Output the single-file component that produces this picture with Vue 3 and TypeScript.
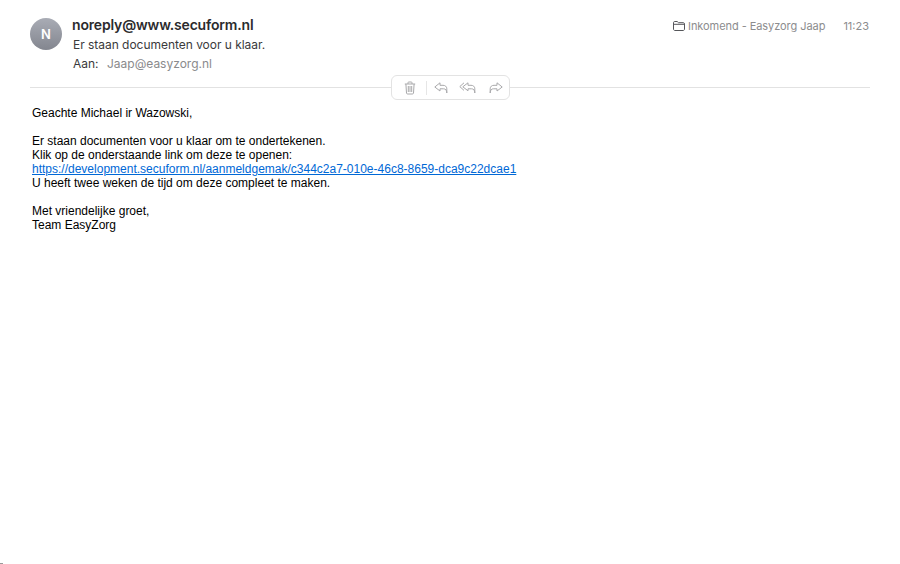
<script setup lang="ts">
const bodyUrl = 'https://development.secuform.nl/aanmeldgemak/c344c2a7-010e-46c8-8659-dca9c22dcae1'
</script>

<template>
  <div class="mail">
    <header class="mail-header">
      <div class="mail-avatar">N</div>
      <div class="mail-info">
        <div class="mail-from">noreply@www.secuform.nl</div>
        <div class="mail-subject">Er staan documenten voor u klaar.</div>
        <div class="mail-to">
          <span class="mail-to-label">Aan:</span>
          <span class="mail-to-value">Jaap@easyzorg.nl</span>
        </div>
      </div>
      <div class="mail-meta">
        <svg class="mail-folder" width="12" height="10" viewBox="0 0 12 10" fill="none" stroke="#55565a" stroke-width="1">
          <path d="M0.5 8V1.7C0.5 1 1 0.5 1.7 0.5H4.2L5.4 1.7H10.3C11 1.7 11.5 2.2 11.5 2.9V8C11.5 8.9 11 9.5 10.2 9.5H1.8C1 9.5 0.5 8.9 0.5 8Z" />
          <path d="M0.5 3.3H11.5" />
        </svg>
        <span class="mail-folder-name">Inkomend - Easyzorg Jaap</span>
        <span class="mail-time">11:23</span>
      </div>
    </header>

    <div class="mail-divider">
      <div class="mail-actions">
        <svg class="icon" width="14" height="14" viewBox="0 0 14 14" fill="none" stroke="#a9a9ab" stroke-width="1">
          <path d="M1.8 3H12.2M5 3V1.7C5 1.2 5.3 1 5.7 1H8.3C8.7 1 9 1.2 9 1.7V3" />
          <path d="M2.9 3L3.5 12C3.6 12.7 4 13 4.6 13H9.4C10 13 10.4 12.7 10.5 12L11.1 3" />
          <path d="M5.3 5V11M7 5V11M8.7 5V11" />
        </svg>
        <span class="sep"></span>
        <svg class="icon reply" width="14" height="12" viewBox="0 0 14 12" fill="none" stroke="#a9a9ab" stroke-width="1" stroke-linejoin="round">
          <path d="M6 0.8L0.8 5L6 9V6.8H9.5C11.5 6.8 12.8 8 12.8 11V6.8C12.8 4.5 11.2 3.3 9 3.3H6Z" />
        </svg>
        <svg class="icon reply-all" width="17" height="12" viewBox="0 0 17 12" fill="none" stroke="#a9a9ab" stroke-width="1" stroke-linejoin="round">
          <path d="M5 0.8L0.8 4.6L5 8.4" />
          <path d="M9 0.8L3.8 4.8L9 8.8V6.8H12.5C14.5 6.8 15.8 8 15.8 11V6.8C15.8 4.5 14.2 3.3 12 3.3H9Z" />
        </svg>
        <svg class="icon forward" width="14" height="12" viewBox="0 0 14 12" fill="none" stroke="#a9a9ab" stroke-width="1" stroke-linejoin="round">
          <path d="M8 0.8L13.2 5L8 9V6.8H4.5C2.5 6.8 1.2 8 1.2 11V6.8C1.2 4.5 2.8 3.3 5 3.3H8Z" />
        </svg>
      </div>
    </div>

    <div class="mail-body">
      <div>Geachte Michael ir Wazowski,</div>
      <br />
      <div>Er staan documenten voor u klaar om te ondertekenen.</div>
      <div>Klik op de onderstaande link om deze te openen:</div>
      <div><a :href="bodyUrl">{{ bodyUrl }}</a></div>
      <div>U heeft twee weken de tijd om deze compleet te maken.</div>
      <br />
      <div>Met vriendelijke groet,</div>
      <div>Team EasyZorg</div>
    </div>
    <span class="corner-mark"></span>
  </div>
</template>

<style scoped>
.mail {
  position: relative;
  width: 900px;
  height: 564px;
  background: #fff;
  box-sizing: border-box;
  padding: 0 30px;
  overflow: hidden;
}

.mail-header {
  display: flex;
  align-items: flex-start;
  padding-top: 16px;
  height: 87px;
  box-sizing: border-box;
  font-family: Inter, "Liberation Sans", sans-serif;
}

.mail-avatar {
  width: 32px;
  height: 32px;
  margin-top: 2px;
  border-radius: 50%;
  background: linear-gradient(#a9acb5, #83868f);
  color: #fff;
  font-size: 13px;
  font-weight: 600;
  line-height: 32px;
  text-align: center;
  flex: none;
}

.mail-info {
  margin-left: 10px;
  flex: 1;
}

.mail-from {
  font-size: 14px;
  font-weight: 600;
  letter-spacing: -0.17px;
  line-height: 18px;
  color: #2b2b2d;
}

.mail-subject {
  margin: 2px 0 0 1px;
  font-size: 12px;
  letter-spacing: -0.03px;
  line-height: 17px;
  color: #3a3a3c;
}

.mail-to {
  margin: 2px 0 0 1px;
  font-size: 12px;
  line-height: 17px;
  display: flex;
}

.mail-to-label {
  width: 34px;
  color: #3a3a3c;
}

.mail-to-value {
  color: #8a8a8c;
}

.mail-meta {
  display: flex;
  align-items: center;
  height: 20px;
  padding-right: 1px;
  font-size: 11px;
  color: #8c8c8e;
}

.mail-folder {
  margin-right: 3px;
}

.mail-folder-name {
  letter-spacing: -0.06px;
}

.mail-time {
  margin-left: 18px;
}

.mail-divider {
  height: 1px;
  background: #e2e2e2;
  position: relative;
}

.mail-actions {
  position: absolute;
  top: -12px;
  left: 361px;
  width: 119px;
  height: 25px;
  box-sizing: border-box;
  background: #fff;
  border: 1px solid #e3e3e3;
  border-radius: 6px;
  display: flex;
  align-items: center;
  padding-left: 11px;
}

.sep {
  width: 1px;
  height: 14px;
  background: #e6e6e6;
  margin: 0 7px 0 9px;
}

.reply-all {
  margin-left: 11px;
}

.forward {
  margin-left: 13px;
}

.mail-body {
  margin: 18px 0 0 2px;
  font-family: "Liberation Sans", Arial, sans-serif;
  font-size: 12px;
  line-height: 14px;
  color: #000;
}

.mail-body a {
  color: #0068d6;
  text-decoration: underline;
}

.corner-mark {
  position: absolute;
  left: 0;
  bottom: 0;
  width: 3px;
  height: 1px;
  background: #9a9a9a;
}
</style>

<style>
html,
body {
  margin: 0;
  background: #fff;
}
</style>
